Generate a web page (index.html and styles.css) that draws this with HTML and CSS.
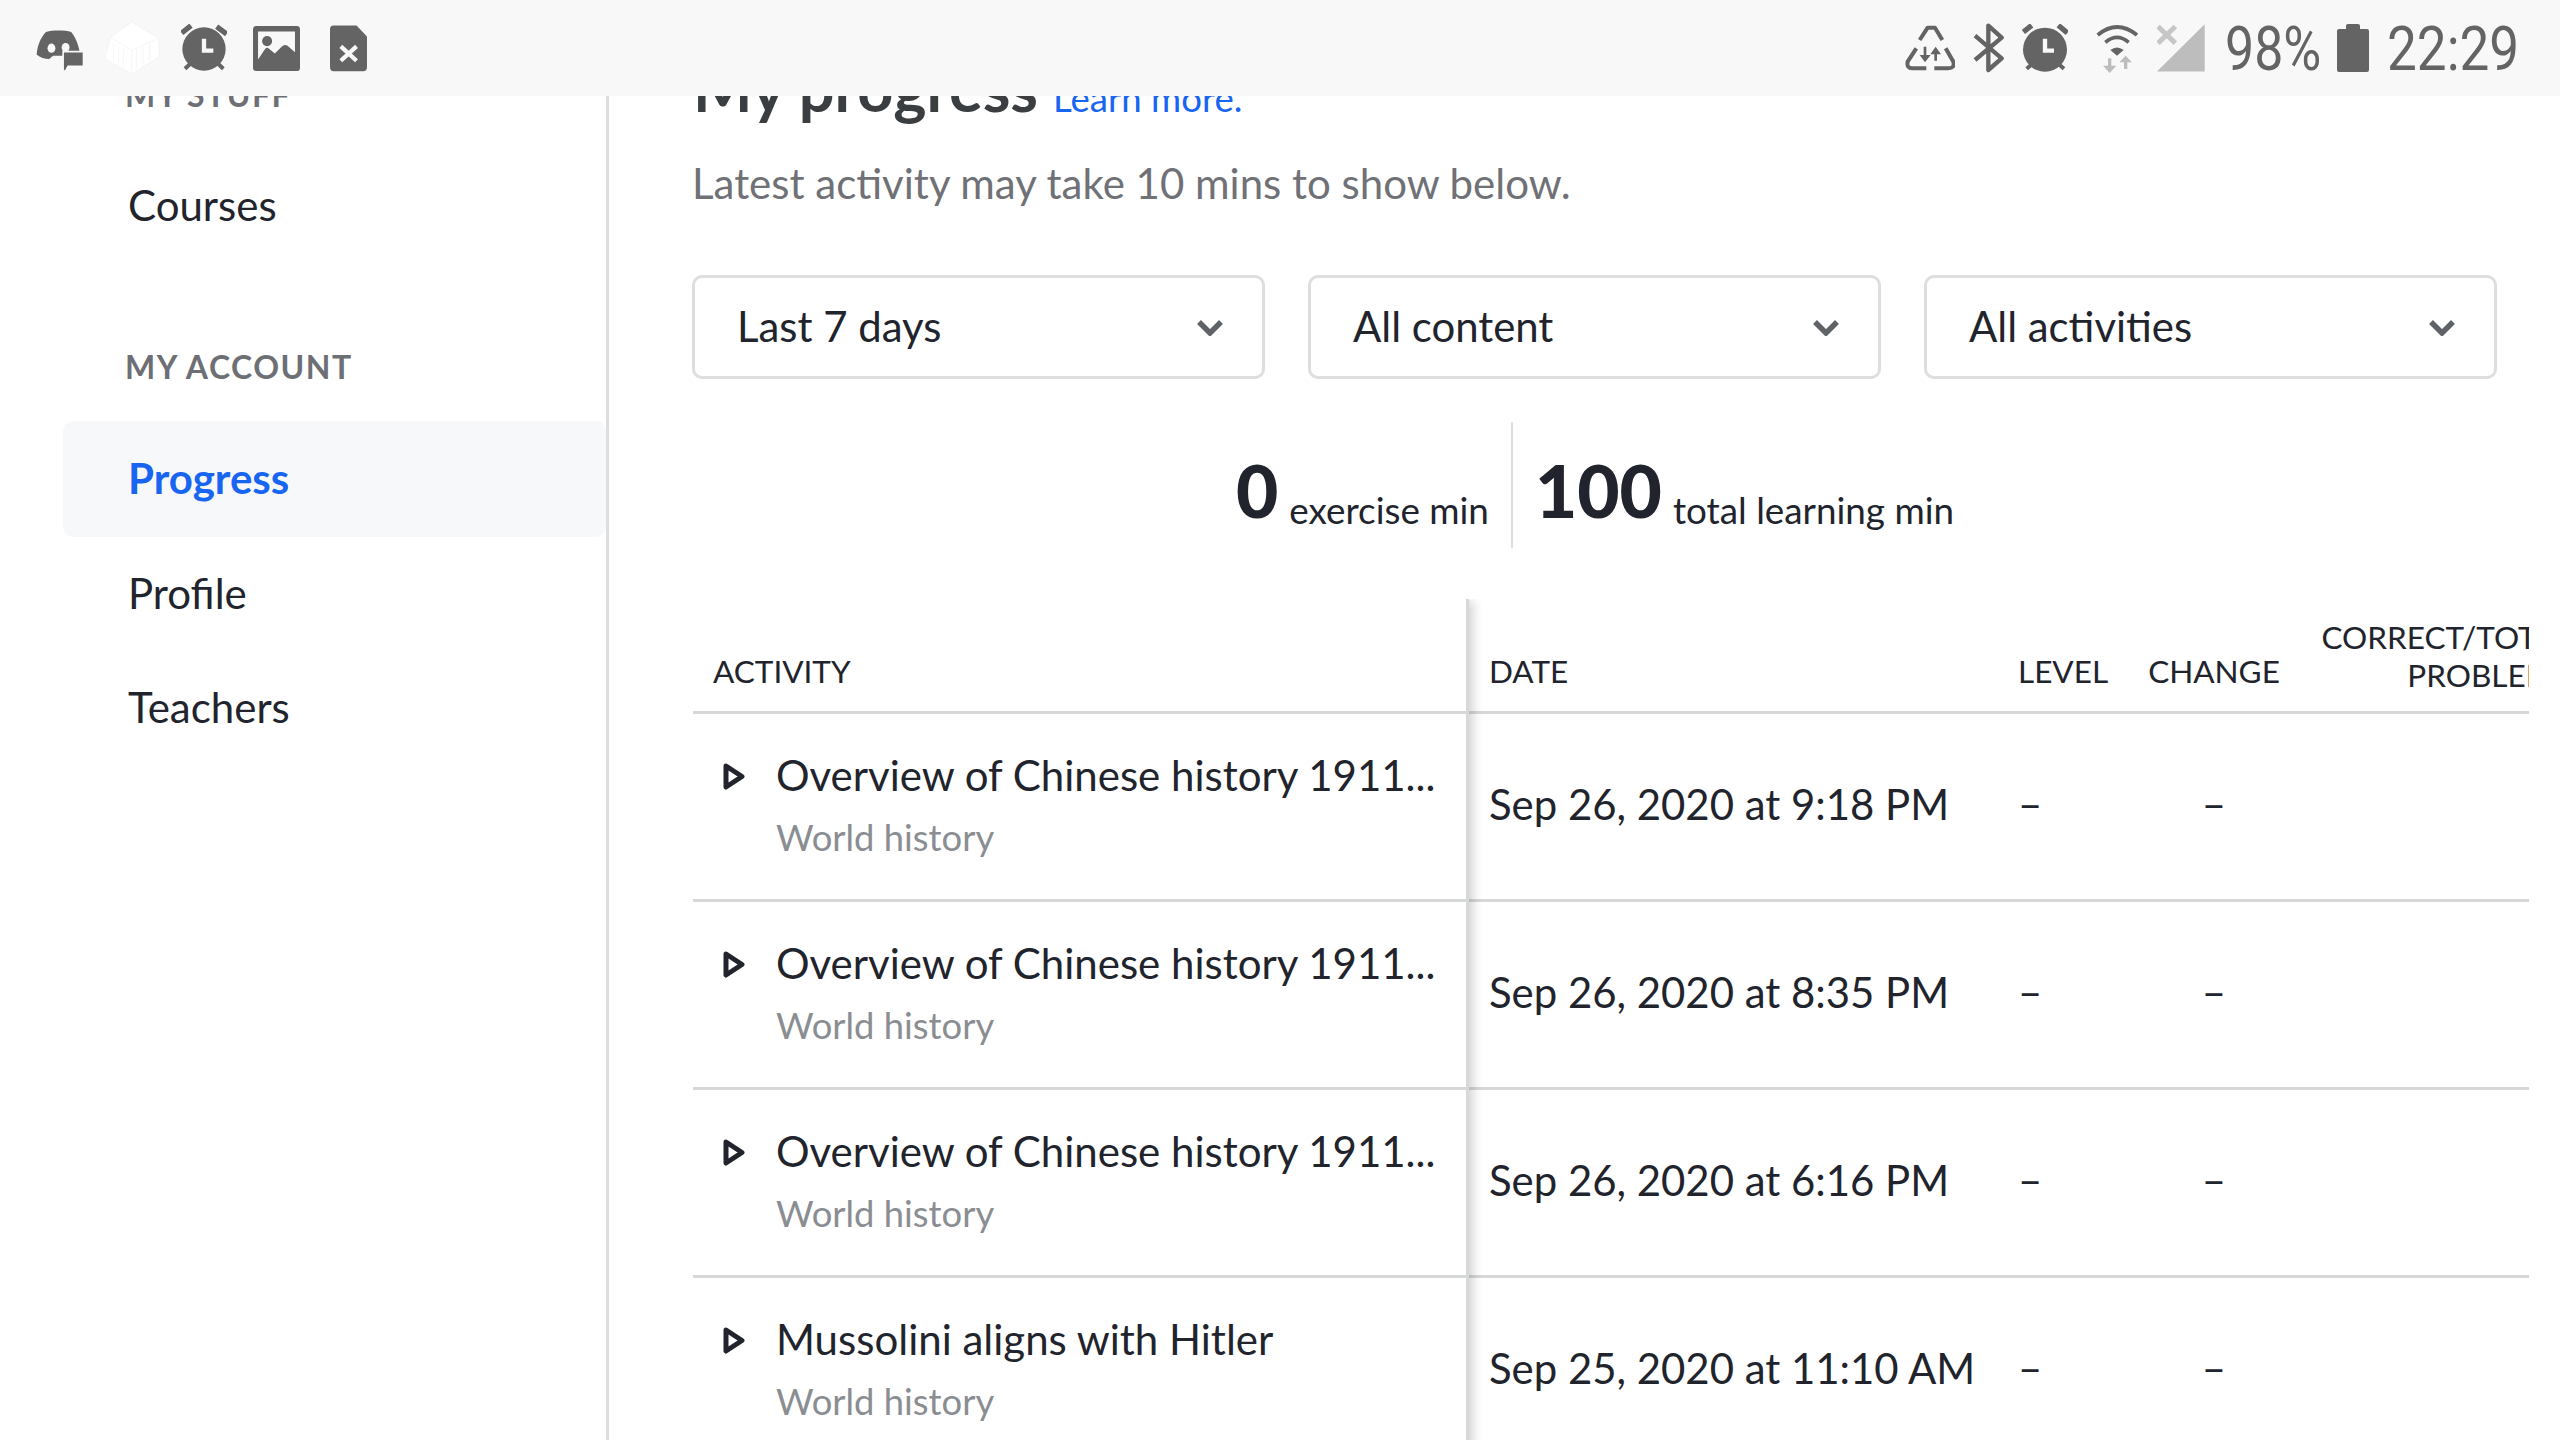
FILE: index.html
```html
<!DOCTYPE html>
<html lang="en">
<head>
<meta charset="utf-8">
<title>My progress</title>
<link rel="stylesheet" href="styles.css">
</head>
<body>
<header class="statusbar">
  <div class="status-left">
    <span class="slot"><svg class="ic" width="48" height="45" viewBox="18 40 146 136"><path class="dark" d="M48 58C70 52 105 52 125 58C140 75 150 105 152 128C140 136 125 140 112 140L102 130L70 130L58 140C45 140 30 135 20 126C22 100 32 75 48 58Z"/><ellipse class="bg" cx="65" cy="107" rx="12" ry="14"/><ellipse class="bg" cx="108" cy="105" rx="12" ry="14"/><path class="halo" d="M103 120H160V160H114L108 175L103 172Z"/><path class="dark" d="M103 120H160V160H114L106 175L103 172Z"/></svg></span>
    <span class="slot"><svg class="ic" width="56" height="54" viewBox="220 16 172 164"><path class="hex" d="M305 18L388 68L390 125L305 178L222 130L240 65Z"/><path class="hexline" d="M240 65L305 105L388 68M305 105V178M250 85V140M265 95V150M280 100V160M320 100V160M340 90V150M360 80V135"/></svg></span>
    <span class="slot"><svg class="ic" width="46" height="48" viewBox="18 28 138 144"><circle class="dark" cx="87" cy="103" r="65"/><path class="ear" d="M20 55L48 33M125 36L155 58"/><path class="ear thin" d="M30 162L45 148M145 162L130 148"/><path class="hand" d="M87 72V108H115"/></svg></span>
    <span class="slot"><svg class="ic" width="47" height="45" viewBox="233 30 140 134"><rect class="dark" x="233" y="30" width="140" height="134" rx="10"/><path class="bg" d="M248 46H358V108L335 88Q328 84 320 90L298 112L280 97Q275 93 270 97L248 130Z"/><circle class="dark" cx="275" cy="75" r="15"/></svg></span>
    <span class="slot"><svg class="ic" width="37" height="47" viewBox="464 28 113 141"><path class="dark" d="M475 28H545L577 62V155Q577 168 565 168H475Q464 168 464 155V40Q464 28 475 28Z"/><path class="hand" d="M497 92L545 136M545 92L497 136"/></svg></span>
  </div>
  <div class="status-right">
    <svg class="ic" width="50" height="46" viewBox="28 30 150 138"><path class="line" d="M72 75L96 38H118L140 75M62 100L36 140Q32 160 50 160H92M150 100L173 140Q178 160 158 160H116"/><path class="line slim" d="M88 95V128M120 137V110"/><path class="dark" d="M72 120H105L88 142ZM104 118H136L120 95Z"/></svg>
    <svg class="ic" width="31" height="50" viewBox="232 25 93 148"><path class="line bt" d="M238 62L318 130L278 165V32L318 68L238 135"/></svg>
    <svg class="ic" width="46" height="48" viewBox="386 28 138 144"><circle class="dark" cx="455" cy="105" r="66"/><path class="ear" d="M390 52L415 32M495 32L522 55"/><path class="ear thin" d="M400 162L414 150M512 162L498 150"/><path class="hand" d="M455 72V108H482"/></svg>
    <svg class="ic wifi" width="43" height="50" viewBox="607 22 129 150"><path class="line wave" d="M612 58Q670 10 730 58M635 80Q670 50 705 80"/><path class="dark" d="M650 103Q670 88 690 103L670 120Z"/><path class="faint-line" d="M648 128V155M696 160V135"/><path class="faint" d="M628 150H668L648 172ZM677 140H715L696 120Z"/></svg>
    <svg class="ic signal" width="48" height="48" viewBox="787 28 144 143"><path class="faint" d="M930 28V170H787Z"/><path class="x" d="M790 35L842 85M842 35L790 85"/></svg>
    <span class="status-text pct">98%</span>
    <svg class="ic battery" width="32" height="48" viewBox="0 0 32 48"><path class="dark" d="M9 2Q9 0 11 0H21Q23 0 23 2V5H30Q32 5 32 7V46Q32 48 30 48H2Q0 48 0 46V7Q0 5 2 5H9Z"/></svg>
    <span class="status-text clock">22:29</span>
  </div>
</header>

<div class="page">
  <nav class="sidebar">
    <h4 class="nav-heading">MY STUFF</h4>
    <a class="nav-item">Courses</a>
    <h4 class="nav-heading second">MY ACCOUNT</h4>
    <a class="nav-item active">Progress</a>
    <a class="nav-item">Profile</a>
    <a class="nav-item">Teachers</a>
  </nav>

  <main class="main">
    <div class="title-row">
      <h1 class="title">My progress</h1>
      <a class="learn">Learn more.</a>
    </div>
    <p class="sub">Latest activity may take 10 mins to show below.</p>

    <div class="filters">
      <div class="select"><span>Last 7 days</span><svg class="chev" width="28" height="17" viewBox="0 0 28 17"><path d="M3 3L14 14L25 3"/></svg></div>
      <div class="select"><span>All content</span><svg class="chev" width="28" height="17" viewBox="0 0 28 17"><path d="M3 3L14 14L25 3"/></svg></div>
      <div class="select"><span>All activities</span><svg class="chev" width="28" height="17" viewBox="0 0 28 17"><path d="M3 3L14 14L25 3"/></svg></div>
    </div>

    <div class="stats">
      <div class="stat"><span class="num">0</span><span class="label">exercise min</span></div>
      <div class="stat stat-second"><span class="num">100</span><span class="label">total learning min</span></div>
    </div>

    <div class="table">
      <div class="col-fixed">
        <div class="head head-activity">ACTIVITY</div>
        <div class="activity">
          <svg class="play" width="22" height="27" viewBox="0 0 22 27"><path d="M3 3L19 13.5L3 24Z"/></svg>
          <div><div class="a-title">Overview of Chinese history 1911...</div><div class="a-sub">World history</div></div>
        </div>
        <div class="activity">
          <svg class="play" width="22" height="27" viewBox="0 0 22 27"><path d="M3 3L19 13.5L3 24Z"/></svg>
          <div><div class="a-title">Overview of Chinese history 1911...</div><div class="a-sub">World history</div></div>
        </div>
        <div class="activity">
          <svg class="play" width="22" height="27" viewBox="0 0 22 27"><path d="M3 3L19 13.5L3 24Z"/></svg>
          <div><div class="a-title">Overview of Chinese history 1911...</div><div class="a-sub">World history</div></div>
        </div>
        <div class="activity">
          <svg class="play" width="22" height="27" viewBox="0 0 22 27"><path d="M3 3L19 13.5L3 24Z"/></svg>
          <div><div class="a-title">Mussolini aligns with Hitler</div><div class="a-sub">World history</div></div>
        </div>
      </div>
      <div class="col-scroll">
        <div class="head cols">
          <div class="c-date">DATE</div>
          <div class="c-level">LEVEL</div>
          <div class="c-change">CHANGE</div>
          <div class="c-correct">CORRECT/TOTAL PROBLEMS</div>
        </div>
        <div class="row cols"><div class="c-date">Sep 26, 2020 at 9:18 PM</div><div class="c-level">–</div><div class="c-change">–</div><div class="c-correct"></div></div>
        <div class="row cols"><div class="c-date">Sep 26, 2020 at 8:35 PM</div><div class="c-level">–</div><div class="c-change">–</div><div class="c-correct"></div></div>
        <div class="row cols"><div class="c-date">Sep 26, 2020 at 6:16 PM</div><div class="c-level">–</div><div class="c-change">–</div><div class="c-correct"></div></div>
        <div class="row cols"><div class="c-date">Sep 25, 2020 at 11:10 AM</div><div class="c-level">–</div><div class="c-change">–</div><div class="c-correct"></div></div>
      </div>
    </div>
  </main>
</div>
</body>
</html>
```
FILE: styles.css
```css
* { box-sizing: border-box; }
html, body { margin: 0; height: 1440px; overflow: hidden; background: #fff; }
body { font-family: Lato, "Open Sans", sans-serif; color: #21242c; position: relative; }

/* status bar */
.statusbar { position: absolute; z-index: 5; top: 0; left: 0; width: 2560px; height: 96px; background: #f8f8f8; display: flex; justify-content: space-between; align-items: center; }
.status-left { display: flex; align-items: center; padding-left: 24px; }
.slot { width: 72px; display: flex; justify-content: center; }
.status-right { display: flex; align-items: center; width: 664px; padding-left: 9px; gap: 18px; }
.ic { display: block; flex: none; }
.dark { fill: #646464; }
.bg { fill: #f8f8f8; }
.halo { fill: #f8f8f8; stroke: #f8f8f8; stroke-width: 10; }
.hex { fill: #fff; stroke: #f0f0f0; stroke-width: 2; }
.hexline { fill: none; stroke: #f1f1f1; stroke-width: 2; }
.ear { fill: none; stroke: #646464; stroke-width: 16; }
.ear.thin { stroke-width: 12; }
.hand { fill: none; stroke: #f8f8f8; stroke-width: 13; }
.line { fill: none; stroke: #646464; stroke-width: 12; stroke-linejoin: round; }
.line.slim { stroke-width: 8; }
.line.bt { stroke-width: 13; }
.line.wave { stroke-width: 11; }
.faint { fill: #bdbdbd; }
.faint-line { fill: none; stroke: #bdbdbd; stroke-width: 10; }
.x { fill: none; stroke: #c6c6c6; stroke-width: 15; }
.wifi { margin-left: 10px; }
.status-text { font-family: Roboto, sans-serif; font-weight: 400; font-size: 61px; line-height: 60px; color: #646464; transform-origin: left center; white-space: nowrap; margin-top: 2px; }
.pct { width: 94px; transform: scaleX(.85); margin-left: 2px; }
.clock { width: 130px; transform: scaleX(.87); }

/* page */
.page { display: flex; height: 1440px; }
.sidebar { flex: none; width: 609px; border-right: 3px solid #dedede; padding: 75px 0 0 63px; display: flex; flex-direction: column; }
.nav-heading { margin: 0 0 33px 62px; font-size: 32px; line-height: 40px; font-weight: 700; letter-spacing: 1.5px; color: #6d6f75; }
.nav-heading.second { margin-top: 85px; margin-bottom: 35px; }
.nav-item { display: flex; align-items: center; height: 114px; padding-left: 65px; font-size: 42px; line-height: 56px; }
.nav-item.active { height: 116px; margin: -1px 0; padding-bottom: 2px; background: #f7f8fa; color: #1865f2; font-weight: 700; border-radius: 10px; }

.main { flex: none; width: 1951px; padding: 48px 0 0 84px; }
.title-row { display: flex; align-items: baseline; gap: 15px; height: 80px; }
.title { margin: 0; font-size: 63px; line-height: 80px; font-weight: 700; color: #3b3e40; }
.learn { font-size: 36.6px; color: #1865f2; }
.sub { margin: 27px 0 0 -1px; font-size: 42px; line-height: 56px; color: #6f7177; }

.filters { display: flex; gap: 43px; width: 1805px; margin: 64px 0 0 -1px; }
.select { flex: 1; height: 104px; border: 3px solid #dedede; border-radius: 10px; display: flex; align-items: center; justify-content: space-between; padding: 0 38px 2px 42px; font-size: 41.9px; }
.chev { margin-top: 2px; }
.chev path { fill: none; stroke: #5f6266; stroke-width: 5.5; }

.stats { display: flex; justify-content: center; width: 1804px; margin-top: 43px; height: 126px; }
.stat { display: flex; align-items: flex-end; gap: 11px; padding: 0 22px 13px 0; }
.stat-second { border-left: 2px solid #dedede; padding: 0 0 13px 22px; }
.num { font-size: 73px; line-height: 90px; font-weight: 900; }
.label { font-size: 36.8px; line-height: 50px; }

.table { display: flex; width: 1836px; margin-top: 51px; }
.col-fixed { flex: none; width: 776px; border-right: 3px solid #d6d8da; box-shadow: 6px 0 10px -2px rgba(0,0,0,.18); clip-path: inset(0 -24px 0 0); position: relative; z-index: 1; background: #fff; }
.col-scroll { flex: none; width: 1060px; overflow: hidden; }
.head { height: 115px; border-bottom: 3px solid #d6d8da; font-size: 31.5px; line-height: 38px; }
.head-activity { padding: 53px 0 0 20px; }
.activity { height: 188px; border-bottom: 3px solid #d6d8da; display: flex; gap: 31px; padding: 35px 0 0 30px; }
.play { flex: none; margin-top: 14px; }
.play path { fill: none; stroke: #21242c; stroke-width: 5; stroke-linejoin: round; }
.a-title { font-size: 42px; line-height: 52px; white-space: nowrap; }
.a-sub { margin-top: 11px; font-size: 36.4px; line-height: 50px; color: #8a8d92; }

.cols { display: grid; grid-template-columns: 530px 130px 170px 273px; width: 1103px; }
.head.cols { align-items: end; padding-bottom: 21px; }
.row { height: 188px; border-bottom: 3px solid #d6d8da; align-items: center; font-size: 41.9px; padding-bottom: 6px; }
.row .c-level, .row .c-change { padding-bottom: 2px; }
.c-date { padding-left: 20px; white-space: nowrap; }
.c-level { padding-left: 19px; }
.c-change { text-align: center; }
.c-correct { text-align: right; margin-bottom: -4px; }
```
